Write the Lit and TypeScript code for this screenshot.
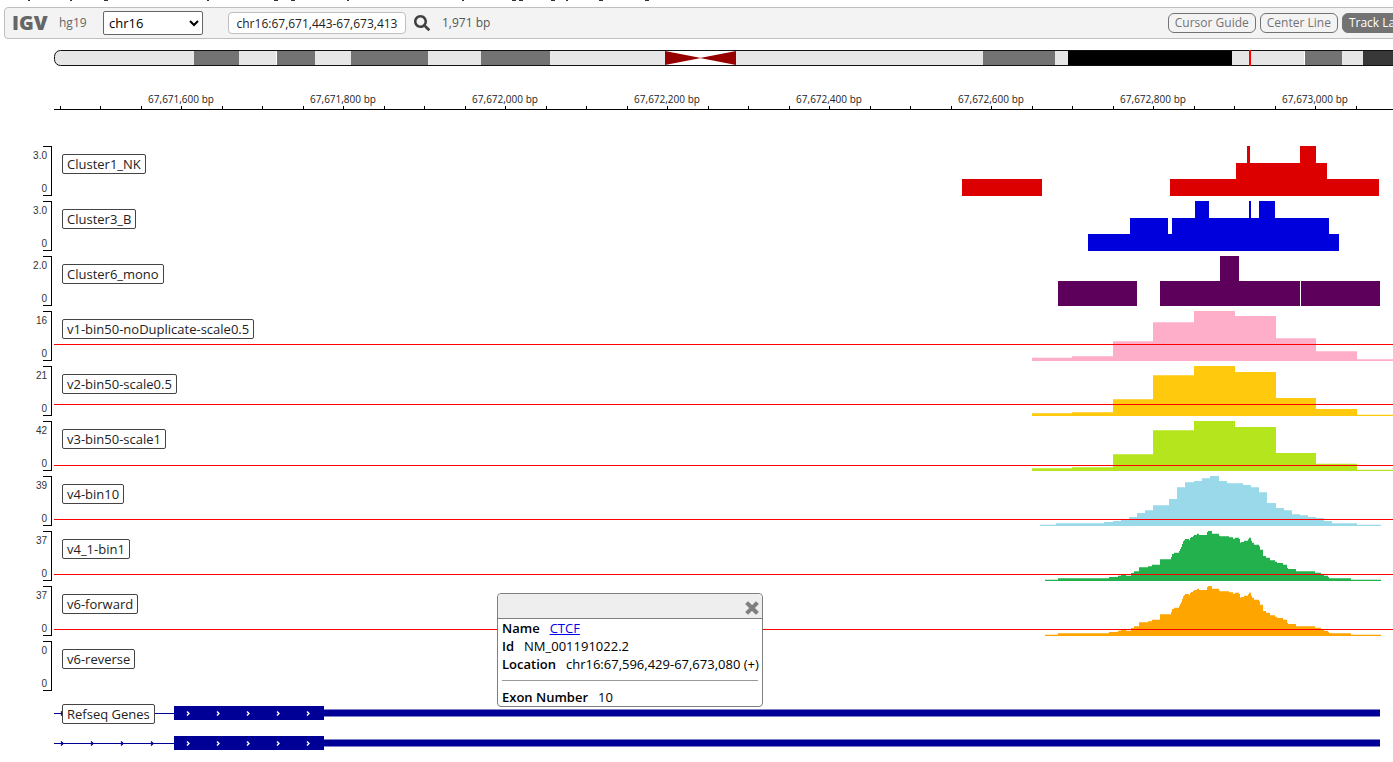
import { LitElement, html, svg, css, nothing } from "lit";
import { customElement, property } from "lit/decorators.js";

/** Width of the column that carries the value axes. */
const AXIS = 54;
const TRACK_HEIGHT = 50;

type Block = [start: number, end: number, height: number];
type Step = [x: number, drop: number];

interface Signal {
  origin: number;
  end: number;
  steps: Step[];
}

interface Track {
  name: string;
  max: string;
  color?: string;
  blocks?: Block[];
  signal?: Signal;
  threshold?: number;
}

const BIN50_X = [0, 120, 243, 363, 486, 609, 732, 852, 975];

const bin50 = (drops: number[]): Signal => ({
  origin: 1032,
  end: 1220,
  steps: BIN50_X.map((x, i) => [x, drops[i]] as Step),
});

const BIN10: Signal = {
  origin: 1030,
  end: 1053,
  steps: [
    [30, 146], [78, 142], [222, 138], [249, 135], [273, 131], [297, 123], [321, 111], [345, 103],
    [369, 88], [417, 69], [441, 34], [465, 19], [492, 15], [516, 7], [540, 0], [567, 15], [591, 22],
    [639, 27], [663, 34], [687, 49], [711, 81], [738, 96], [762, 103], [786, 115], [810, 118],
    [834, 123], [858, 126], [882, 135], [906, 142], [981, 146],
  ],
};

const BIN1: Signal = {
  origin: 1030,
  end: 1053,
  steps: [
    [45, 146], [84, 142], [237, 138], [264, 134], [273, 132], [288, 134], [303, 126], [312, 121],
    [327, 109], [354, 106], [366, 101], [390, 85], [423, 78], [426, 69], [432, 65], [447, 60],
    [450, 54], [453, 48], [456, 39], [459, 31], [462, 28], [465, 24], [477, 28], [480, 21], [483, 18],
    [489, 15], [492, 12], [501, 8], [507, 12], [531, 3], [534, 0], [546, 8], [567, 14], [570, 16],
    [597, 19], [609, 23], [615, 20], [627, 24], [630, 35], [633, 33], [642, 29], [654, 25], [657, 20],
    [663, 29], [666, 35], [672, 41], [687, 46], [690, 56], [699, 75], [708, 80], [720, 88],
    [735, 92], [741, 96], [759, 101], [771, 111], [774, 114], [798, 121], [855, 125], [873, 130],
    [882, 134], [894, 138], [897, 142], [963, 146],
  ],
};

const TRACKS: Track[] = [
  {
    name: "Cluster1_NK", max: "3.0", color: "#dc0000",
    blocks: [[962, 1042, 17], [1170, 1379, 17], [1236, 1327, 33], [1247, 1250, 50], [1300, 1316, 50]],
  },
  {
    name: "Cluster3_B", max: "3.0", color: "#0000dc",
    blocks: [[1088, 1339, 17], [1130, 1168, 33], [1172, 1329, 33], [1195, 1209, 50], [1249, 1251, 50], [1259, 1275, 50]],
  },
  {
    name: "Cluster6_mono", max: "2.0", color: "#5c005c",
    blocks: [[1058, 1137, 25], [1160, 1300, 25], [1301, 1380, 25], [1220, 1239, 50]],
  },
  { name: "v1-bin50-noDuplicate-scale0.5", max: "16", color: "#ffaec9", threshold: 33,
    signal: bin50([140, 136, 91, 34, 0, 15, 82, 121, 145]) },
  { name: "v2-bin50-scale0.5", max: "21", color: "#ffc90e", threshold: 38,
    signal: bin50([142, 139, 100, 28, 0, 18, 96, 129, 146]) },
  { name: "v3-bin50-scale1", max: "42", color: "#b5e61d", threshold: 44,
    signal: bin50([142, 139, 100, 28, 0, 18, 96, 128, 146]) },
  { name: "v4-bin10", max: "39", color: "#9ad9ea", threshold: 43, signal: BIN10 },
  { name: "v4_1-bin1", max: "37", color: "#22b14c", threshold: 43, signal: BIN1 },
  { name: "v6-forward", max: "37", color: "#ffa500", threshold: 43, signal: BIN1 },
  { name: "v6-reverse", max: "0" },
];

/** Stepped area, drawn at three units to the pixel. */
const area = (s: Signal) => {
  const path = s.steps.map(([x, y]) => `H${x}V${y}`).join("");
  return `M${s.steps[0][0]} 150${path}H${s.end}V150Z`;
};

@customElement("igv-track")
class IgvTrack extends LitElement {
  @property({ attribute: false }) track!: Track;

  static styles = css`
    :host { display: grid; grid-template-columns: 54px minmax(0, 1fr); height: 50px; }
    svg { display: block; width: 100%; height: 50px; overflow: hidden; }
    .bracket { fill: none; stroke: #000; shape-rendering: crispEdges; }
    .value { font: 10px "Liberation Sans", Arial, sans-serif; fill: #333; text-anchor: end; }
    .view { position: relative; }
    .name {
      position: absolute; left: 8px; top: 8px; box-sizing: border-box; height: 20px; padding: 0 4px;
      border: 1px solid #444; border-radius: 2px; background: #fff; color: #222;
      font: 13px/18px "Open Sans", sans-serif; white-space: nowrap;
    }
    .blocks, .threshold { shape-rendering: crispEdges; }
  `;

  render() {
    const t = this.track;
    return html`
      <svg aria-hidden="true">
        <path class="bracket" d="M43 .5H51.5V49.5H43" />
        <text class="value" x="47" y="13">${t.max}</text>
        <text class="value" x="47" y="46">0</text>
      </svg>
      <div class="view">
        <svg aria-hidden="true">
          ${t.blocks
            ? svg`<g class="blocks" fill=${t.color}>${t.blocks.map(
                ([a, b, h]) => svg`<rect x=${a - AXIS} y=${TRACK_HEIGHT - h} width=${b - a} height=${h} />`
              )}</g>`
            : nothing}
          ${t.signal
            ? svg`<path fill=${t.color} transform="translate(${t.signal.origin - AXIS}) scale(${1 / 3})" d=${area(t.signal)} />`
            : nothing}
          ${t.threshold
            ? svg`<rect class="threshold" x="0" y=${t.threshold} width="100%" height="1" fill="#f00" />`
            : nothing}
        </svg>
        <div class="name">${t.name}</div>
      </div>
    `;
  }
}

@customElement("igv-genes")
class IgvGenes extends LitElement {
  static styles = css`
    :host { display: block; margin-left: 54px; position: relative; }
    svg { display: block; width: 100%; height: 66px; }
    .name {
      position: absolute; left: 8px; top: 8px; box-sizing: border-box; height: 20px; padding: 0 4px;
      border: 1px solid #444; border-radius: 2px; background: #fff; color: #222;
      font: 13px/18px "Open Sans", sans-serif; white-space: nowrap;
    }
    .gene { fill: #000096; }
    .edge { fill: #8080cb; }
    .arrow { fill: none; stroke: #000096; stroke-width: 1.4; }
    .arrow-light { fill: none; stroke: #fff; stroke-width: 1.4; }
  `;

  private row(y: number) {
    const chevron = (x: number) => `M${x} ${y + 5.5}l2 2l-2 2`;
    return svg`
      <rect class="gene" x="0" y=${y + 7} width="120" height="1" />
      <path class="arrow" d=${[7, 37, 67, 97].map(chevron).join("")} />
      <rect class="edge" x="270" y=${y + 3} width="1056" height="8" />
      <rect class="gene" x="270" y=${y + 4} width="1056" height="6" />
      <rect class="gene" x="120" y=${y} width="150" height="14" />
      <path class="arrow-light" d=${[133, 163, 193, 223, 253].map(chevron).join("")} />
    `;
  }

  render() {
    return html`
      <svg aria-hidden="true">${this.row(10)}${this.row(40)}</svg>
      <div class="name">Refseq Genes</div>
    `;
  }
}

@customElement("igv-ideogram")
class IgvIdeogram extends LitElement {
  static styles = css`
    :host { display: block; margin-left: 54px; }
    svg { display: block; width: 100%; height: 16px; }
  `;

  render() {
    const bands: [number, number, string][] = [
      [194, 239, "#737373"], [276, 277, "#fff"], [277, 315, "#737373"], [351, 428, "#737373"],
      [481, 550, "#737373"], [665, 736, "#fff"], [983, 1055, "#737373"], [1068, 1232, "#000"],
      [1304, 1305, "#fff"], [1305, 1342, "#737373"], [1363, 1440, "#383838"],
    ];
    return html`
      <svg role="img" aria-label="Chromosome 16">
        <rect x=".5" y=".5" width="1500" height="15" rx="6" fill="#e6e6e6" />
        ${bands.map(([a, b, c]) => svg`<rect x=${a - AXIS} y="1" width=${b - a} height="14" fill=${c} />`)}
        <path d="M611 1L647 8L611 15ZM682 1L646 8L682 15Z" fill="#960000" />
        <rect x=".5" y=".5" width="1500" height="15" rx="6" fill="none" stroke="#111" />
        <rect x="1195" y="0" width="2" height="16" fill="#f00" />
      </svg>
    `;
  }
}

@customElement("igv-ruler")
class IgvRuler extends LitElement {
  static styles = css`
    :host { display: block; margin-left: 54px; }
    svg { display: block; width: 100%; height: 20px; overflow: hidden; }
    .line { fill: #000; }
    .mark { font: 10px "Open Sans", sans-serif; fill: #222; text-anchor: middle; }
  `;

  render() {
    const ticks = Array.from({ length: 34 }, (_, k) => Math.floor(6.5 + k * 40.49));
    return html`
      <svg aria-hidden="true">
        <rect class="line" x="0" y="19" width="100%" height="1" />
        ${ticks.map((x, k) => svg`
          <rect class="line" x=${x} y="16" width="1" height="3" />
          ${k % 4 === 3
            ? svg`<text class="mark" x=${x} y="13">${(67671600 + ((k - 3) / 4) * 200).toLocaleString("en-US")} bp</text>`
            : nothing}
        `)}
      </svg>
    `;
  }
}

@customElement("app-root")
class AppRoot extends LitElement {
  static styles = css`
    :host {
      display: block; overflow: hidden; background: #fff; color: #222;
      font: 13px/18px "Open Sans", sans-serif;
    }
    .cut-line { display: block; width: 100%; height: 7px; }
    .navbar {
      display: flex; align-items: center; box-sizing: border-box; height: 32px;
      margin: 0 -120px 0 4px; padding: 0 87px 0 7px;
      border: 1px solid #bfbfbf; border-radius: 4px; background: #f3f3f3; color: #737373;
      white-space: nowrap;
    }
    .logo { width: 35px; font-size: 20px; font-weight: 800; color: #666; }
    .genome { width: 28px; margin-left: 12px; font-size: 12px; color: #666; }
    .chromosome {
      box-sizing: border-box; width: 100px; height: 24px; margin-left: 16px; padding: 0 0 0 1px;
      border: 1px solid #666; border-radius: 2px; background: #fff; color: #000;
      font: 13px "Open Sans", sans-serif;
    }
    .locus {
      box-sizing: border-box; width: 178px; height: 22px; margin-left: 25px; padding: 0;
      border: 1px solid #bfbfbf; border-radius: 4px; background: #fff; color: #222;
      font: 12px "Open Sans", sans-serif; text-align: center;
    }
    .search { display: flex; margin-left: 8px; padding: 0; border: 0; background: none; }
    .span { margin-left: 12px; font-size: 12px; color: #555; }
    .toggles { display: flex; gap: 4px; margin-left: auto; }
    .toggle {
      box-sizing: border-box; height: 20px; padding: 0 6px; border: 1px solid #737373;
      border-radius: 6px; background: #f3f3f3; color: #737373; font: 12px/16px "Open Sans", sans-serif;
    }
    .toggle.on { background: #737373; color: #fff; }
    igv-ideogram { margin-top: 11px; }
    igv-ruler { margin-top: 24px; }
    .tracks { position: relative; display: grid; gap: 5px; margin-top: 36px; }
    .popover {
      position: absolute; left: 497px; top: 447px; box-sizing: border-box; width: 266px;
      border: 1px solid #7f7f7f; border-radius: 4px; background: #fff; color: #000;
    }
    .popover-head {
      display: flex; justify-content: flex-end; align-items: center; box-sizing: border-box;
      height: 25px; padding: 4px 3px 0; border-bottom: 1px solid #7f7f7f;
      border-radius: 4px 4px 0 0; background: #eee;
    }
    .close { display: flex; padding: 0; border: 0; background: none; }
    .popover-body { padding: 0 4px; white-space: nowrap; }
    .label { margin-right: 10px; font-weight: 600; }
    .rule { height: 1px; margin: 7px 0; border: 0; background: #999; }
    a { color: #00e; }
  `;

  render() {
    const tails = [28, 70, 207, 347, 462, 566];
    const hooks = [104, 274, 291, 512, 519, 551, 599, 645];
    return html`
      <svg class="cut-line" aria-hidden="true">
        ${tails.map((x) => svg`<rect x=${x} y="0" width="2" height="1" fill="#333" />`)}
        ${hooks.map((x) => svg`<rect x=${x} y="0" width="4" height="1" fill="#333" />`)}
      </svg>
      <nav class="navbar">
        <div class="logo">IGV</div>
        <div class="genome">hg19</div>
        <select class="chromosome" aria-label="Chromosome"><option>chr16</option></select>
        <input class="locus" aria-label="Locus" .value=${"chr16:67,671,443-67,673,413"} />
        <button class="search" aria-label="Search">
          <svg width="16" height="16" viewBox="0 0 512 512"><path fill="#404040" d="M505 442.700L405.300 343c-4.500-4.500-10.600-7-17-7H372c27.600-35.300 44-79.700 44-128C416 93.100 322.900 0 208 0S0 93.100 0 208s93.100 208 208 208c48.300 0 92.700-16.400 128-44v16.300c0 6.400 2.500 12.500 7 17l99.700 99.700c9.400 9.400 24.600 9.400 33.900 0l28.300-28.300c9.400-9.400 9.400-24.600.1-34zM208 336c-70.700 0-128-57.200-128-128 0-70.700 57.200-128 128-128 70.700 0 128 57.200 128 128 0 70.700-57.200 128-128 128z" /></svg>
        </button>
        <div class="span">1,971 bp</div>
        <div class="toggles">
          <button class="toggle">Cursor Guide</button>
          <button class="toggle">Center Line</button>
          <button class="toggle on">Track Labels</button>
        </div>
      </nav>
      <igv-ideogram></igv-ideogram>
      <igv-ruler></igv-ruler>
      <main class="tracks">
        ${TRACKS.map((t) => html`<igv-track .track=${t}></igv-track>`)}
        <igv-genes></igv-genes>
        <section class="popover">
          <div class="popover-head">
            <button class="close" aria-label="Close">
              <svg width="14" height="14" viewBox="0 0 14 14"><path d="M3 3L11 11M11 3L3 11" stroke="#7f7f7f" stroke-width="4" stroke-linecap="square" /></svg>
            </button>
          </div>
          <div class="popover-body">
            <div><span class="label">Name</span><a href="#ctcf">CTCF</a></div>
            <div><span class="label">Id</span>NM_001191022.2</div>
            <div><span class="label">Location</span>chr16:67,596,429-67,673,080 (+)</div>
            <hr class="rule" />
            <div><span class="label">Exon Number</span>10</div>
          </div>
        </section>
      </main>
    `;
  }
}
